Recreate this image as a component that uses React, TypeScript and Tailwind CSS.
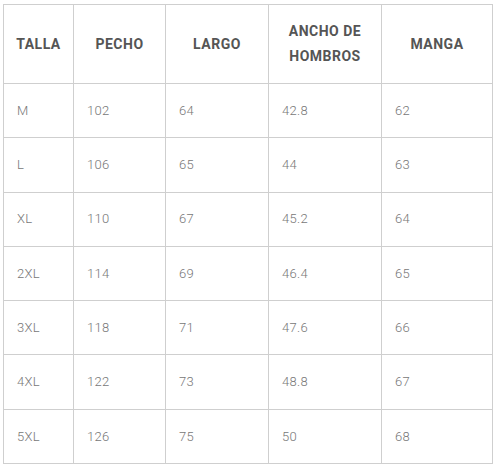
const headers = ['TALLA', 'PECHO', 'LARGO', 'ANCHO DE HOMBROS', 'MANGA']

const rows = [
  ['M', '102', '64', '42.8', '62'],
  ['L', '106', '65', '44', '63'],
  ['XL', '110', '67', '45.2', '64'],
  ['2XL', '114', '69', '46.4', '65'],
  ['3XL', '118', '71', '47.6', '66'],
  ['4XL', '122', '73', '48.8', '67'],
  ['5XL', '126', '75', '50', '68'],
]

const colWidths = ['w-[70px]', 'w-[92px]', 'w-[103px]', 'w-[113px]', 'w-[111px]']

export default function App() {
  return (
    <div className="min-h-screen bg-white pl-[3px] pt-[4px] font-['Roboto',sans-serif]">
      <table className="w-[489px] table-fixed border-collapse border border-[#cfcfcf]">
        <colgroup>
          {colWidths.map((w, i) => (
            <col key={i} className={w} />
          ))}
        </colgroup>
        <thead>
          <tr className="h-[79px]">
            {headers.map((h) => (
              <th
                key={h}
                className="border border-[#cfcfcf] px-2 text-center text-[14px] font-bold leading-[25px] tracking-[0.5px] text-[#555]"
              >
                {h === 'ANCHO DE HOMBROS' ? (
                  <>
                    ANCHO DE
                    <br />
                    HOMBROS
                  </>
                ) : (
                  h
                )}
              </th>
            ))}
          </tr>
        </thead>
        <tbody>
          {rows.map((r) => (
            <tr key={r[0]} className="h-[54.3px]">
              {r.map((c, i) => (
                <td
                  key={i}
                  className="border border-[#cfcfcf] px-[13px] text-left text-[13px] font-light tracking-[0.3px] text-[#777]"
                >
                  {c}
                </td>
              ))}
            </tr>
          ))}
        </tbody>
      </table>
    </div>
  )
}
